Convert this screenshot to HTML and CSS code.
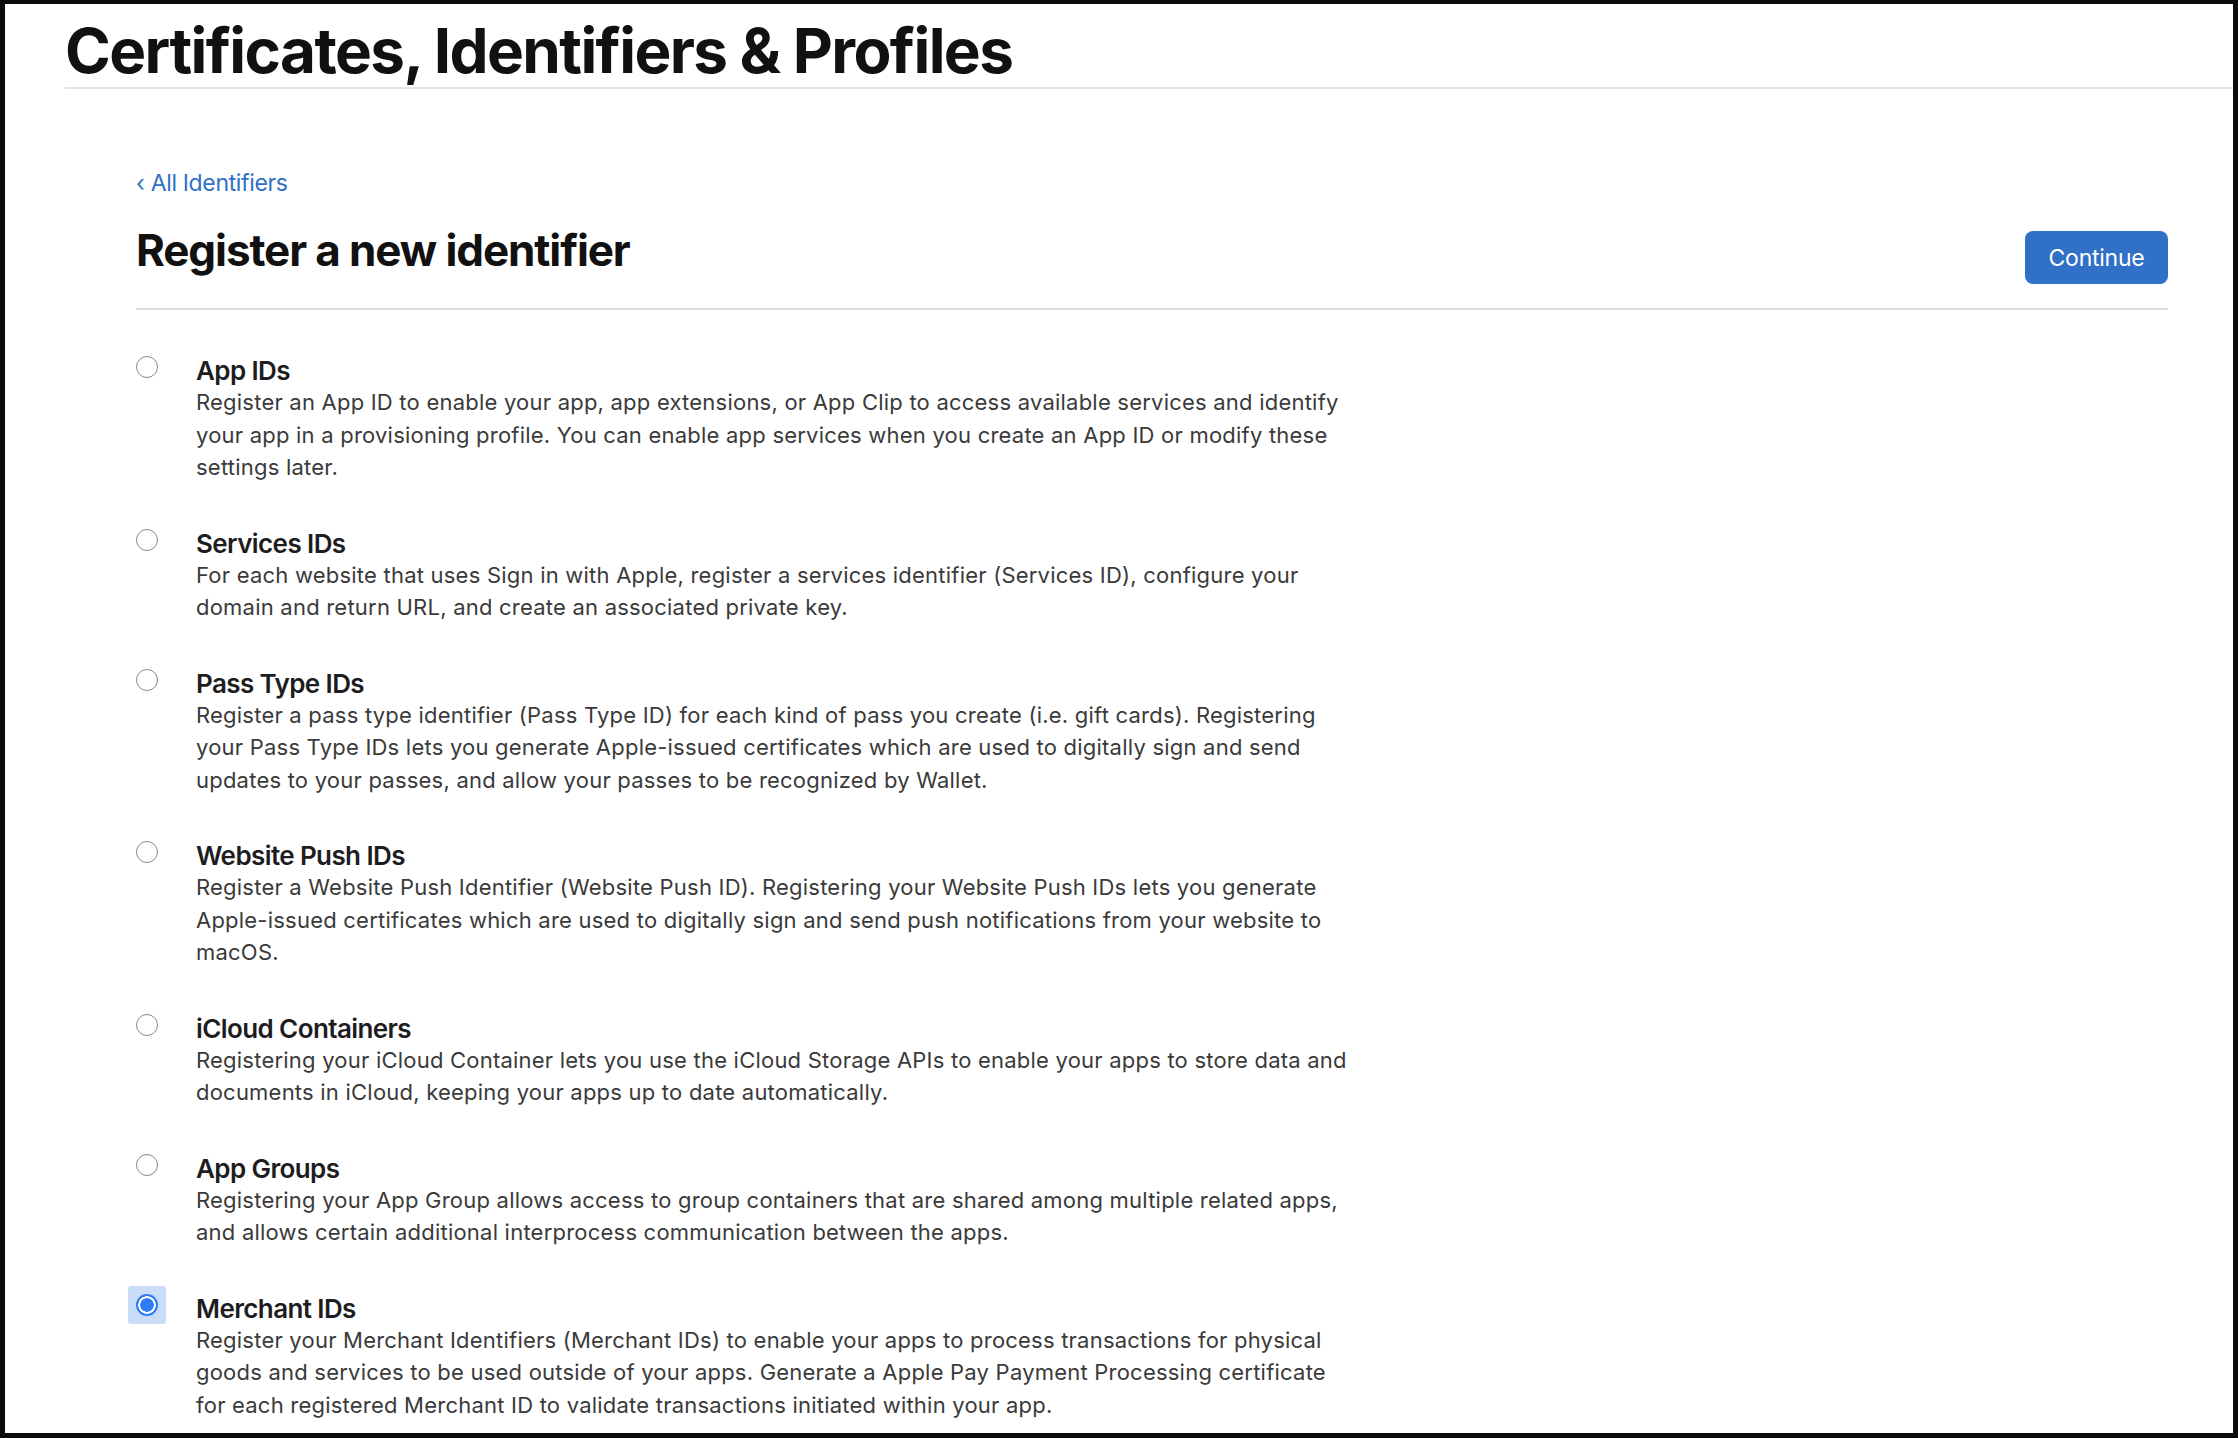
FILE: index.html
```html
<!DOCTYPE html>
<html lang="en">
<head>
<meta charset="utf-8">
<title>Certificates, Identifiers &amp; Profiles</title>
<link rel="stylesheet" href="styles.css">
</head>
<body>
<div class="frame">
  <header class="top">
    <h1 class="brand">Certificates, Identifiers &amp; Profiles</h1>
  </header>
  <main class="content">
    <a class="back" href="#">‹ All Identifiers</a>
    <div class="head-row">
      <h2 class="page-title">Register a new identifier</h2>
      <button class="btn" type="button">Continue</button>
    </div>
    <ul class="options">
      <li class="option">
        <span class="radio"></span>
        <div class="opt-body">
          <div class="opt-title">App IDs</div>
          <p class="opt-desc">Register an App ID to enable your app, app extensions, or App Clip to access available services and identify your app in a provisioning profile. You can enable app services when you create an App ID or modify these settings later.</p>
        </div>
      </li>
      <li class="option">
        <span class="radio"></span>
        <div class="opt-body">
          <div class="opt-title">Services IDs</div>
          <p class="opt-desc">For each website that uses Sign in with Apple, register a services identifier (Services ID), configure your domain and return URL, and create an associated private key.</p>
        </div>
      </li>
      <li class="option">
        <span class="radio"></span>
        <div class="opt-body">
          <div class="opt-title">Pass Type IDs</div>
          <p class="opt-desc">Register a pass type identifier (Pass Type ID) for each kind of pass you create (i.e. gift cards). Registering your Pass Type IDs lets you generate Apple-issued certificates which are used to digitally sign and send updates to your passes, and allow your passes to be recognized by Wallet.</p>
        </div>
      </li>
      <li class="option">
        <span class="radio"></span>
        <div class="opt-body">
          <div class="opt-title">Website Push IDs</div>
          <p class="opt-desc">Register a Website Push Identifier (Website Push ID). Registering your Website Push IDs lets you generate Apple-issued certificates which are used to digitally sign and send push notifications from your website to macOS.</p>
        </div>
      </li>
      <li class="option">
        <span class="radio"></span>
        <div class="opt-body">
          <div class="opt-title">iCloud Containers</div>
          <p class="opt-desc">Registering your iCloud Container lets you use the iCloud Storage APIs to enable your apps to store data and documents in iCloud, keeping your apps up to date automatically.</p>
        </div>
      </li>
      <li class="option">
        <span class="radio"></span>
        <div class="opt-body">
          <div class="opt-title">App Groups</div>
          <p class="opt-desc">Registering your App Group allows access to group containers that are shared among multiple related apps, and allows certain additional interprocess communication between the apps.</p>
        </div>
      </li>
      <li class="option">
        <span class="radio radio-on"></span>
        <div class="opt-body">
          <div class="opt-title">Merchant IDs</div>
          <p class="opt-desc">Register your Merchant Identifiers (Merchant IDs) to enable your apps to process transactions for physical goods and services to be used outside of your apps. Generate a Apple Pay Payment Processing certificate for each registered Merchant ID to validate transactions initiated within your app.</p>
        </div>
      </li>
    </ul>
  </main>
</div>
</body>
</html>
```

FILE: styles.css
```css
* { box-sizing: border-box; }
html, body { margin: 0; padding: 0; background: #fff; }
body {
  font-family: Inter, "Noto Sans", "Liberation Sans", sans-serif;
  color: #1d1d1f;
}
.frame {
  width: 2238px;
  height: 1438px;
  border: 5px solid #0b0b0b;
  border-top-width: 4px;
  overflow: hidden;
  background: #fff;
}
.top {
  margin-left: 60px;
  padding-top: 10px;
  border-bottom: 2px solid #e3e3e3;
}
.brand {
  margin: 0;
  font-size: 62px;
  line-height: 73px;
  font-weight: 700;
  letter-spacing: -1.6px;
  color: #111;
}
.content {
  padding: 0 65px 0 131px;
}
.back {
  display: inline-block;
  margin-top: 80px;
  font-size: 23px;
  line-height: 28px;
  letter-spacing: -0.34px;
  color: #2f6fc7;
  text-decoration: none;
}
.head-row {
  display: flex;
  justify-content: space-between;
  align-items: flex-start;
  margin-top: 27px;
  padding-bottom: 24px;
  border-bottom: 2px solid #dedede;
}
.page-title {
  margin: 0;
  font-size: 44px;
  line-height: 52px;
  font-weight: 700;
  letter-spacing: -1.1px;
  color: #111;
}
.btn {
  margin-top: 7px;
  width: 143px;
  height: 53px;
  border: 0;
  border-radius: 8px;
  background: #3070c6;
  color: #fff;
  font-family: inherit;
  font-size: 23px;
  letter-spacing: -0.24px;
  padding: 0;
}
.options {
  list-style: none;
  margin: 0;
  padding: 45px 0 0;
}
.option {
  display: flex;
  align-items: flex-start;
  gap: 38px;
  margin-bottom: 44px;
}
.radio {
  position: relative;
  flex: none;
  width: 22px;
  height: 22px;
  margin-top: 1px;
  border: 1.5px solid #8a8a8a;
  border-radius: 50%;
  background: #fff;
}
.radio-on {
  border: 0;
  background: transparent;
}
.radio-on::before {
  content: "";
  position: absolute;
  inset: -8px;
  background: #c9ddf8;
  border-radius: 3px;
}
.radio-on::after {
  content: "";
  position: absolute;
  inset: 0;
  border-radius: 50%;
  background: radial-gradient(circle, #2f7cf6 0 6.5px, #fff 7px 8.5px, #2f7cf6 9px);
}
.opt-body { width: 1162px; }
.opt-title {
  font-size: 26px;
  line-height: 31px;
  font-weight: 600;
  letter-spacing: -0.6px;
  color: #1d1d1f;
}
.opt-desc {
  margin: 0;
  font-size: 22px;
  line-height: 32.5px;
  letter-spacing: 0.22px;
  color: #3a3a3a;
}
```
